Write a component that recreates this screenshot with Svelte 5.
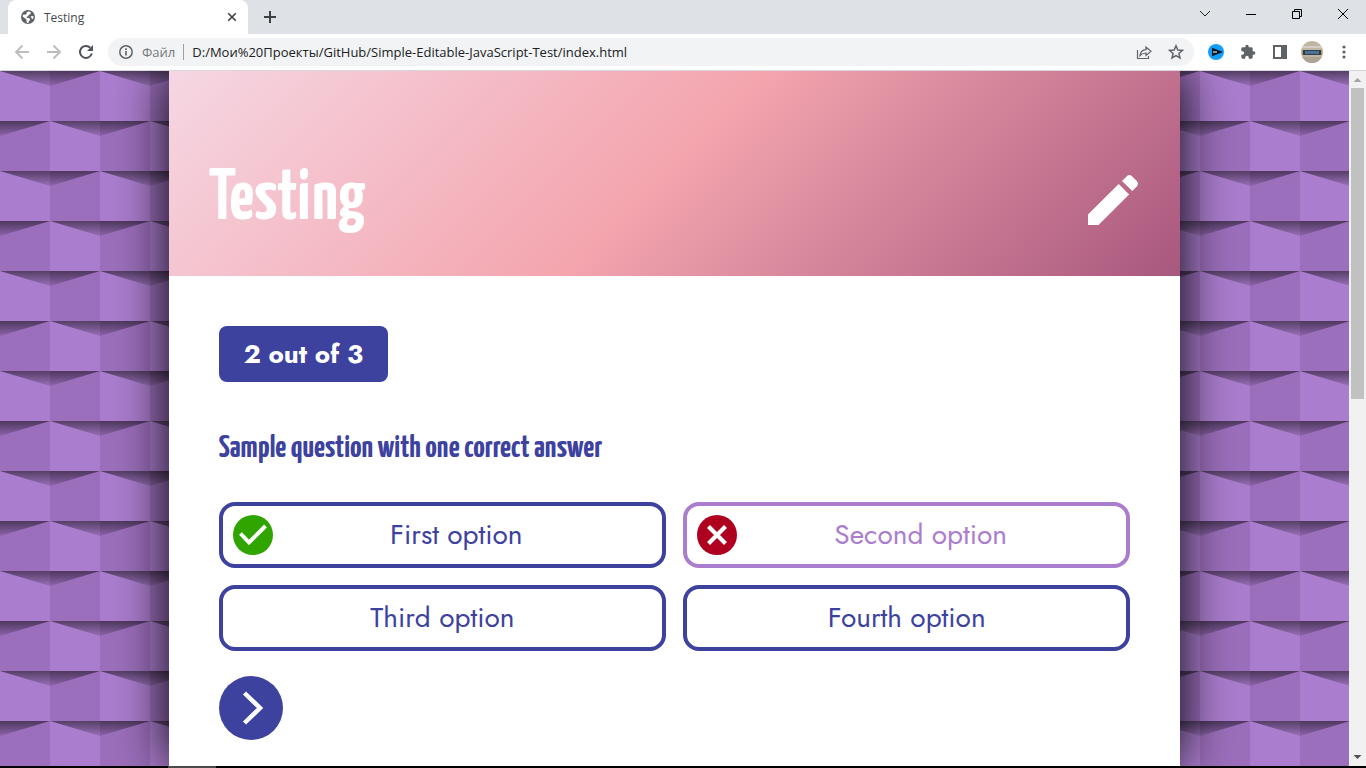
<script>
  const options = [
    { label: 'First option', mark: 'right' },
    { label: 'Second option', mark: 'wrong', chosen: true },
    { label: 'Third option' },
    { label: 'Fourth option' }
  ];
  let address = $state('D:/Мои%20Проекты/GitHub/Simple-Editable-JavaScript-Test/index.html');
</script>

<div class="browser">
  <header class="tabs">
    <div class="tab">
      <svg width="16" height="16" viewBox="0 0 16 16"><circle cx="8" cy="8" r="7" fill="#5f6368" /><path d="M8.6 2.2 11 3.4l-.6 1.7-1.9.8-.2 1.4-1.8.5.4 1.1 2.2.2 1.2 1.6-1.2 1.2-.6 1.8-1.4.2-.7-1.7.2-1.7L3.2 8 2.5 7l1-1.4 1.7.2 1.3-.9.2-1.4z" fill="#fff" /><path d="M10.6 7.2 13.6 7l-.4 2.8-1.2.2z" fill="#fff" /></svg>
      <span class="tab-title">Testing</span>
      <button class="plain" aria-label="Close tab"><svg width="16" height="16" viewBox="0 0 16 16"><path d="m4.2 4.2 7.6 7.6m0-7.6-7.6 7.6" stroke="#3c4043" stroke-width="1.6" /></svg></button>
    </div>
    <button class="plain new" aria-label="New tab"><svg width="16" height="16" viewBox="0 0 16 16"><path d="M8 2v12M2 8h12" stroke="#3c4043" stroke-width="2" /></svg></button>
    <div class="window">
      <button class="plain" aria-label="Search tabs"><svg width="12" height="12" viewBox="0 0 12 12"><path d="m1 3 5 5 5-5" fill="none" stroke="#222" /></svg></button>
      <button class="plain" aria-label="Minimize"><svg width="12" height="12" viewBox="0 0 12 12"><path d="M1 6.500h10" stroke="#000" /></svg></button>
      <button class="plain" aria-label="Restore"><svg width="12" height="12" viewBox="0 0 12 12"><path d="M1.500 3.500h7v7h-7zM3.500 3.500v-2h7v7h-2" fill="none" stroke="#000" /></svg></button>
      <button class="plain" aria-label="Close"><svg width="12" height="12" viewBox="0 0 12 12"><path d="m1 1 10 10M11 1 1 11" stroke="#000" /></svg></button>
    </div>
  </header>

  <nav class="toolbar">
    <button class="plain" aria-label="Back"><svg width="16" height="16" viewBox="0 0 16 16"><path d="M15 8H2m6.500-6.500L2 8l6.500 6.500" fill="none" stroke="#babcbe" stroke-width="1.800" /></svg></button>
    <button class="plain" aria-label="Forward"><svg width="16" height="16" viewBox="0 0 16 16"><path d="M1 8h13M7.500 1.500 14 8l-6.500 6.500" fill="none" stroke="#babcbe" stroke-width="1.800" /></svg></button>
    <button class="plain" aria-label="Reload"><svg width="16" height="16" viewBox="0 0 16 16"><path d="M13.800 9.500a6 6 0 1 1-1.500-5.800" fill="none" stroke="#50545a" stroke-width="2" /><path d="M15 1v6H9z" fill="#50545a" /></svg></button>
    <div class="omnibox">
      <svg width="16" height="16" viewBox="0 0 16 16"><circle cx="8" cy="8" r="6.200" fill="none" stroke="#5f6368" stroke-width="1.500" /><path d="M8 7v4.500M8 4.300V6" stroke="#5f6368" stroke-width="1.600" /></svg>
      <label for="address">Файл</label>
      <input id="address" type="text" bind:value={address} />
      <button class="plain" aria-label="Share"><svg width="16" height="16" viewBox="0 0 16 16"><path d="M1.500 6v8.500h11V12M4 11.500c.4-3.800 2.400-5.700 6-5.900V3l5 4.300-5 4.200V9C7.400 9 5.500 9.700 4 11.500z" fill="none" stroke="#5f6368" stroke-width="1.200" /></svg></button>
      <button class="plain" aria-label="Bookmark"><svg width="16" height="16" viewBox="0 0 16 16"><path d="m8 1.800 1.800 4.200 4.600.4-3.500 3 1.100 4.500L8 11.500l-4 2.400 1.100-4.500-3.500-3L6.200 6z" fill="none" stroke="#5f6368" stroke-width="1.500" /></svg></button>
    </div>
    <button class="plain" aria-label="Media extension"><svg width="16" height="16" viewBox="0 0 16 16"><circle cx="8" cy="8" r="8" fill="#159cff" /><path d="M4 3.700 15 8 4 12.300z" fill="#101820" /><path d="M5 7h4v2H5z" fill="#8493a0" /></svg></button>
    <button class="plain" aria-label="Extensions"><svg width="16" height="16" viewBox="0 0 24 24"><path d="M20.500 11H19V7c0-1.100-.9-2-2-2h-4V3.500a2.500 2.500 0 0 0-5 0V5H4c-1.100 0-2 .9-2 2v3.800h1.500a2.700 2.700 0 0 1 0 5.400H2V20c0 1.100.9 2 2 2h3.800v-1.500a2.700 2.700 0 0 1 5.400 0V22H17c1.100 0 2-.9 2-2v-4h1.500a2.500 2.500 0 0 0 0-5z" fill="#5f6368" /></svg></button>
    <button class="plain" aria-label="Side panel"><svg width="16" height="16" viewBox="0 0 16 16"><path d="M2 2h12v12H2z" fill="none" stroke="#5f6368" stroke-width="2" /><path d="M9 2h5v12H9z" fill="#5f6368" /></svg></button>
    <button class="plain" aria-label="Profile"><svg width="22" height="22" viewBox="0 0 22 22"><defs><clipPath id="face"><circle cx="11" cy="11" r="11" /></clipPath></defs><g clip-path="url(#face)"><path d="M0 0h22v22H0z" fill="#c0b4a6" /><path d="M0 5h22v2H0z" fill="#d6cdc2" /><path d="M0 16h22v6H0z" fill="#aea293" /><path d="M2 9h18v5H2z" fill="#2c3f50" /><path d="M4 10h14v3H4z" fill="#4e7194" /><path d="M1 9h1v5H1zM20 9h1v5h-1z" fill="#c98d38" /></g></svg></button>
    <button class="plain" aria-label="Menu"><svg width="16" height="16" viewBox="0 0 16 16"><g fill="#5f6368"><circle cx="8" cy="3" r="1.600" /><circle cx="8" cy="8" r="1.600" /><circle cx="8" cy="13" r="1.600" /></g></svg></button>
  </nav>

  <div class="viewport">
    <div class="page">
      <svg class="wall" width="100%" height="100%" aria-hidden="true">
        <defs>
          <linearGradient id="shade" x1="0" y1="0" x2="0" y2="15" gradientUnits="userSpaceOnUse">
            <stop offset="0" stop-color="#000" stop-opacity=".5" />
            <stop offset="1" stop-color="#000" stop-opacity=".1" />
          </linearGradient>
          <pattern id="bricks" width="100" height="100" patternUnits="userSpaceOnUse">
            <path d="M0 0h50v50H0zM50 50h50v50H50z" fill="#ab7dce" />
            <path d="M50 0h50v50H50zM0 50h50v50H0z" fill="#9c6fbc" />
            <path d="M0 0h100L50 15z" fill="url(#shade)" />
            <g transform="translate(0 50)">
              <path d="M0 0h50L0 15zM50 0h50v15z" fill="url(#shade)" />
            </g>
          </pattern>
        </defs>
        <rect width="100%" height="100%" fill="url(#bricks)" />
      </svg>

      <main>
        <div class="banner">
          <h1>Testing</h1>
          <button class="plain" aria-label="Edit test"><svg width="50" height="50" viewBox="0 0 50 50"><path d="M0 39.600 30.700 9l10.400 10.400L10.500 50H0zM34 6l4.600-4.600q2.800-2.800 5.600 0l4.600 4.600q2.400 2.800 0 5.600L44.300 16z" fill="#fff" /></svg></button>
        </div>
        <section>
          <p class="count">2 out of 3</p>
          <h2>Sample question with one correct answer</h2>
          <div class="options">
            {#each options as option}
              <button class="option" class:marked={option.mark} class:chosen={option.chosen}>
                {#if option.mark === 'right'}
                  <svg width="40" height="40" viewBox="0 0 40 40"><circle cx="20" cy="20" r="20" fill="#30a500" /><path d="m7.500 18.500 8.500 9L32.500 11" fill="none" stroke="#fff" stroke-width="4" /></svg>
                {:else if option.mark === 'wrong'}
                  <svg width="40" height="40" viewBox="0 0 40 40"><circle cx="20" cy="20" r="20" fill="#b00020" /><path d="m11.500 11.500 17 17m0-17-17 17" stroke="#fff" stroke-width="4.200" /></svg>
                {/if}
                <span>{option.label}</span>
              </button>
            {/each}
          </div>
          <button class="next" aria-label="Next question"><svg width="64" height="64" viewBox="0 0 64 64"><path d="m25.500 17 15.500 15-15.500 15" fill="none" stroke="#fff" stroke-width="4.500" /></svg></button>
        </section>
      </main>
    </div>

    <div class="scrollbar" aria-hidden="true">
      <svg width="17" height="17" viewBox="0 0 17 17"><path d="m4.500 11 4-4 4 4z" fill="#a3a3a3" /></svg>
      <div class="track"><div class="thumb"></div></div>
      <svg width="17" height="17" viewBox="0 0 17 17"><path d="m4.500 6 4 4 4-4z" fill="#505050" /></svg>
    </div>
  </div>
  <div class="taskbar"><span></span></div>
</div>

<style>
  .browser {
    display: flex;
    flex-direction: column;
    height: 100vh;
    overflow: hidden;
    font-family: "Segoe UI", "Open Sans", "Noto Sans", sans-serif;
    background: #fff;
  }
  svg { display: block; flex: none; }
  .plain {
    display: flex;
    align-items: center;
    justify-content: center;
    padding: 0;
    border: 0;
    background: none;
  }
  .tabs {
    display: flex;
    flex: none;
    height: 34px;
    padding-left: 8px;
    background: #dee1e6;
  }
  .tab {
    display: flex;
    align-items: center;
    gap: 8px;
    width: 240px;
    padding: 0 8px 0 12px;
    box-sizing: border-box;
    border-radius: 8px 8px 0 0;
    background: #fff;
  }
  .tab-title { flex: 1; font-size: 12px; color: #45494d; }
  .new { margin-left: 8px; width: 28px; }
  .window { display: flex; height: 28px; margin-left: auto; }
  .window .plain { width: 46px; }
  .toolbar {
    display: flex;
    flex: none;
    align-items: center;
    height: 36px;
    padding: 0 6px;
    border-bottom: 1px solid #d5d7da;
    background: #fff;
  }
  .toolbar .plain { flex: none; width: 32px; height: 28px; }
  .omnibox {
    display: flex;
    flex: 1;
    align-items: center;
    min-width: 0;
    height: 28px;
    margin: 0 6px;
    padding: 0 2px 0 10px;
    box-sizing: border-box;
    border-radius: 14px;
    background: #f1f3f4;
    font-size: 13px;
  }
  label {
    margin-left: 8px;
    padding-right: 8px;
    border-right: 1px solid #9aa0a6;
    line-height: 16px;
    color: #74787c;
  }
  input {
    flex: 1;
    min-width: 0;
    padding: 0 0 0 8px;
    border: 0;
    outline: 0;
    background: none;
    font: inherit;
    color: #202124;
  }
  .viewport { display: flex; flex: 1; min-height: 0; }
  .page {
    position: relative;
    display: flex;
    flex: 1;
    justify-content: center;
    min-width: 0;
    overflow: hidden;
  }
  .wall { position: absolute; inset: 0; }
  main {
    position: relative;
    width: 75%;
    background: #fff;
    box-shadow: 0 0 50px #000;
    color: #3d429f;
  }
  .banner {
    display: flex;
    align-items: center;
    justify-content: space-between;
    padding: 80px 42px 28px 40px;
    background: linear-gradient(135deg, #f5d7e3, #f4a5ae 49%, #a8577e);
  }
  h1, h2, p { margin: 0; }
  h1, h2 { font-family: "Yanone Kaffeesatz", "Open Sans", sans-serif; font-weight: 700; }
  h1 { font-size: 72px; line-height: 97px; color: #fff; }
  section { padding: 50px; }
  .count {
    width: fit-content;
    padding: 0 25px;
    border-radius: 8px;
    background: #3d429f;
    font-family: Jost, Lato, sans-serif;
    font-size: 26px;
    font-weight: 700;
    line-height: 56px;
    color: #fff;
  }
  h2 { margin: 45px 0 33px; font-size: 32px; line-height: 42px; }
  .options {
    display: grid;
    grid-template-columns: 1fr 1fr;
    gap: 17px;
  }
  .option {
    display: flex;
    align-items: center;
    height: 66px;
    padding: 0 10px;
    border: 4px solid #3d429f;
    border-radius: 16px;
    background: #fff;
    font-family: Jost, Lato, sans-serif;
    font-size: 28px;
    font-weight: 400;
    color: #3d429f;
  }
  .option span { flex: 1; padding-bottom: 2px; text-align: center; }
  .marked { padding-right: 22px; }
  .chosen { border-color: #ab7dce; color: #ab7dce; }
  .next {
    margin-top: 25px;
    padding: 0;
    border: 0;
    border-radius: 50%;
    background: #3d429f;
  }
  .scrollbar {
    display: flex;
    flex-direction: column;
    width: 17px;
    background: #f1f1f1;
  }
  .track { flex: 1; padding: 0 2px; }
  .thumb { height: 47%; background: #c1c1c1; }
  .taskbar { flex: none; height: 2px; padding-left: 168px; background: #000; }
  .taskbar span { display: block; width: 48px; height: 2px; background: #4a4a4a; }
</style>
